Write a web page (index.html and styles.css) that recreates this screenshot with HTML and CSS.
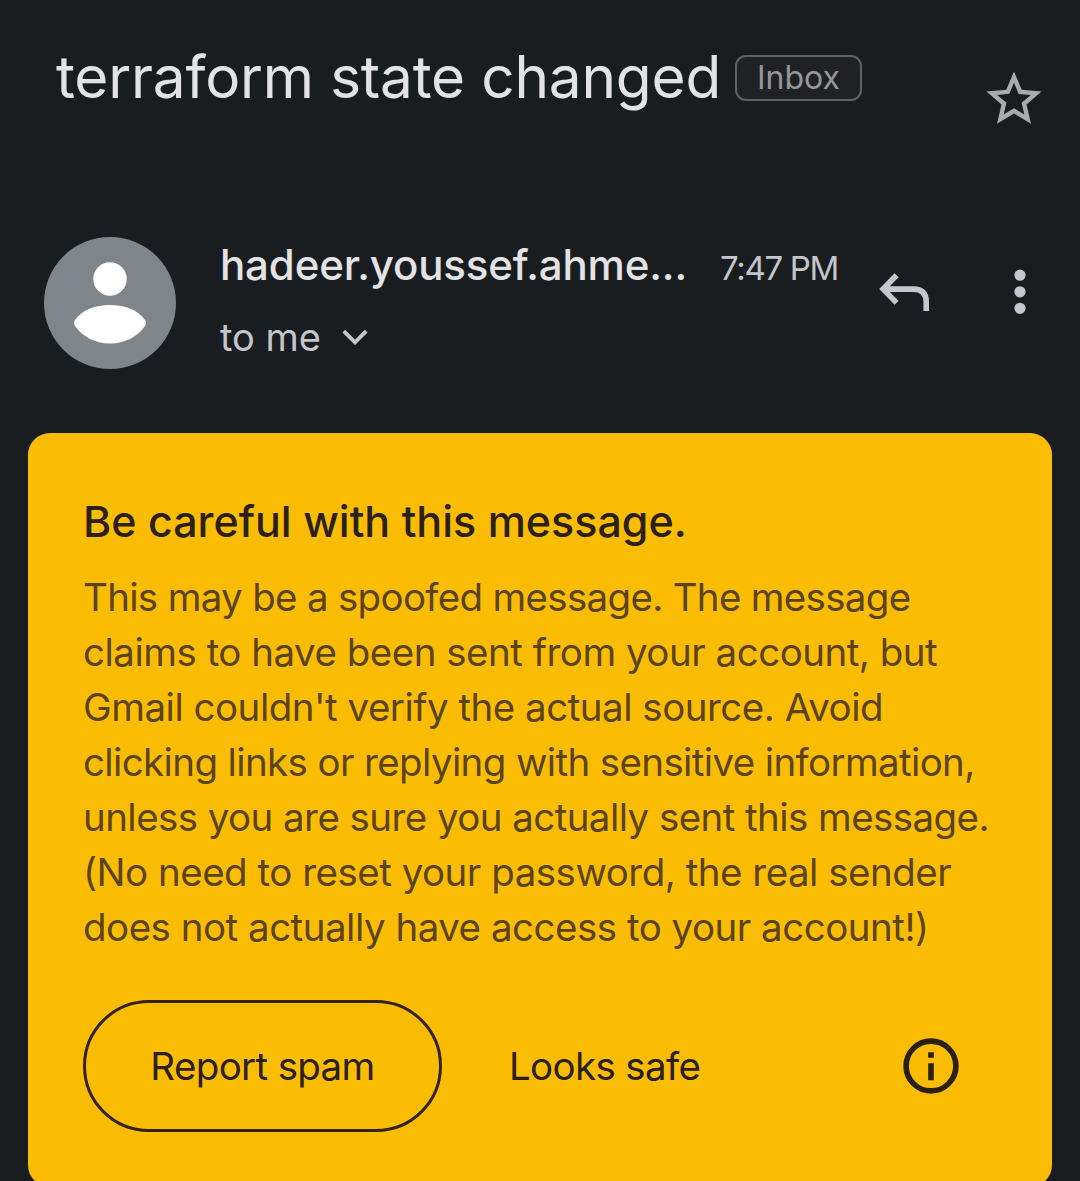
FILE: index.html
```html
<!DOCTYPE html>
<html lang="en">
<head>
<meta charset="utf-8">
<title>terraform state changed</title>
<link rel="stylesheet" href="styles.css">
</head>
<body>
<header class="subject">
  <h1 class="subject-text">terraform state changed</h1>
  <span class="label"><span class="label-text">Inbox</span></span>
  <svg class="star" viewBox="0 0 24 24"><path d="M22 9.24l-7.19-.62L12 2 9.19 8.63 2 9.24l5.46 4.73L5.82 21 12 17.27 18.18 21l-1.63-7.03L22 9.24zM12 15.4l-3.76 2.27 1-4.28-3.32-2.88 4.38-.38L12 6.1l1.71 4.04 4.38.38-3.32 2.88 1 4.28L12 15.4z"/></svg>
</header>
<section class="sender">
  <svg class="avatar" viewBox="0 0 132 132"><circle cx="66" cy="66" r="66" fill="#80858b"/><circle cx="66" cy="42" r="16.7" fill="#fff"/><path d="M31 83C38 73 51 68 66 68s28 5 35 15q2 3 0 6c-8 11-20 17.5-35 17.5S39 100 31 89q-2-3 0-6z" fill="#fff"/></svg>
  <div class="who">
    <div class="who-top"><span class="name">hadeer.youssef.ahme...</span><span class="time">7:47 PM</span></div>
    <div class="to"><span class="to-text">to me</span><svg class="chevron" viewBox="0 0 28 18"><path d="M2.8 3.2 14 14.4 25.2 3.2"/></svg></div>
  </div>
  <svg class="reply" viewBox="0 0 52 42"><path d="M17.6 5.3 4.1 19.1l13.5 13.8M4.1 19.1H34.5Q47.2 19.1 47.2 31.8V41"/></svg>
  <svg class="more" viewBox="0 0 12 46"><circle cx="6" cy="6.2" r="5.6"/><circle cx="6" cy="22.8" r="5.6"/><circle cx="6" cy="39.3" r="5.6"/></svg>
</section>
<main class="warning">
  <h2 class="warning-title">Be careful with this message.</h2>
  <p class="warning-text"><span class="tightest">This may be a spoofed message. The message</span><br>claims to have been sent from your account, but<br>Gmail couldn't verify the actual source. Avoid<br><span class="tighter">clicking links or replying with sensitive information,</span><br><span class="tight">unless you are sure you actually sent this message.</span><br>(No need to reset your password, the real sender<br>does not actually have access to your account!)</p>
  <div class="actions">
    <button class="report"><span class="report-text">Report spam</span></button>
    <span class="safe">Looks safe</span>
    <svg class="info" viewBox="0 0 56 56"><circle cx="28" cy="28" r="24.9"/><path d="M28 14.2v5.5M28 25.2v17"/></svg>
  </div>
</main>
</body>
</html>
```
FILE: styles.css
```css
* { box-sizing: border-box; }
body { margin: 0; height: 1181px; overflow: hidden; background: #1a1d20; color: #e3e3e6; font-family: Inter, Roboto, sans-serif; white-space: nowrap; }
svg { display: block; flex: none; }
.subject { display: flex; align-items: flex-start; height: 237px; padding-left: 56px; }
.subject-text { margin: 41px 0 0; width: 679px; font-size: 58.5px; line-height: 72px; font-weight: 400; letter-spacing: -0.2px; }
.label { display: flex; align-items: center; justify-content: center; margin-top: 55px; width: 127px; height: 46px; border: 2px solid #5e6063; border-radius: 11px; background: #202125; color: #95979b; font-size: 32px; }
.label-text { position: relative; top: -1px; }
.star { width: 66px; height: 66px; margin: 66px 0 0 119px; fill: #a9abaf; }
.sender { display: flex; align-items: flex-start; height: 196px; padding-left: 44px; }
.avatar { width: 132px; height: 132px; }
.who { width: 659px; padding-left: 44px; }
.who-top { display: flex; align-items: baseline; height: 63px; line-height: 55px; }
.name { flex: none; width: 500px; font-size: 42px; font-weight: 500; letter-spacing: -0.15px; }
.time { color: #c4c6cb; font-size: 33px; letter-spacing: -1.3px; }
.to { display: flex; align-items: center; height: 73px; color: #c4c6cb; font-size: 38px; }
.to-text { width: 121px; }
.chevron { width: 28px; height: 18px; fill: none; stroke: #c4c6cb; stroke-width: 3.8; }
.reply { width: 52px; height: 42px; margin: 33px 0 0 44px; fill: none; stroke: #c4c6d0; stroke-width: 5.6; }
.more { width: 12px; height: 46px; margin: 32px 0 0 83px; fill: #c4c6d0; }
.warning { width: 1024px; height: 754px; margin-left: 28px; padding: 59px 55px 0; border-radius: 22px; background: #fbbd04; color: #2b2009; }
.warning-title { margin: 0; font-size: 43px; line-height: 58px; font-weight: 500; }
.warning-text { margin: 20px 0 0; color: #5b430c; font-size: 38.5px; line-height: 55px; letter-spacing: -0.5px; }
.tight { letter-spacing: -0.57px; }
.tighter { letter-spacing: -0.63px; }
.tightest { letter-spacing: -0.69px; }
.actions { display: flex; align-items: center; height: 132px; margin-top: 45px; font-size: 38.5px; letter-spacing: -0.65px; }
.report { width: 359px; height: 132px; border: 3px solid #33230a; border-radius: 66px; background: none; color: inherit; font: inherit; letter-spacing: inherit; }
.safe { width: 394px; margin-left: 67px; }
.info { width: 56px; height: 56px; fill: none; stroke: #2b2009; stroke-width: 5.6; }
```
